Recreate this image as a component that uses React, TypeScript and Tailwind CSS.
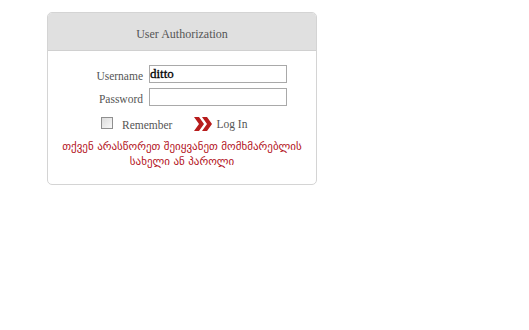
import { useState } from "react";

const serif = { fontFamily: '"Liberation Serif", "DejaVu Serif", serif' };

function Chevrons() {
  return (
    <svg width="20" height="16" viewBox="0 0 20 16">
      <path d="M1 1 L6 1 L11 8 L6 15 L1 15 L6 8 Z" fill="#b71c1c" />
      <path d="M9 1 L14 1 L19 8 L14 15 L9 15 L14 8 Z" fill="#b71c1c" />
    </svg>
  );
}

export default function App() {
  const [username, setUsername] = useState("ditto");
  const [password, setPassword] = useState("");
  const [remember, setRemember] = useState(false);

  return (
    <div className="w-[529px] h-[330px] bg-white pt-[12px] pl-[47px]" style={serif}>
      <div className="w-[270px] h-[173px] rounded-[5px] border border-[#d4d4d4] overflow-hidden">
        {/* header */}
        <div className="h-[38px] bg-[#e0e0e0] border-b border-[#d0d0d0] flex items-center justify-center text-[12px] text-[#555] pt-[4px]">
          User Authorization
        </div>

        {/* form */}
        <div className="pt-[14px] flex flex-col">
          <div className="flex items-center h-[18px]">
            <label className="w-[101px] text-right text-[11.5px] text-[#555] pr-[6px] pt-[6px]">Username</label>
            <input
              value={username}
              onChange={(e) => setUsername(e.target.value)}
              className="w-[138px] h-[18px] border border-[#a9a9a9] text-[13px] text-black px-0 leading-none outline-none [-webkit-text-stroke:0.3px_black]"
              style={serif}
            />
          </div>
          <div className="flex items-center h-[18px] mt-[5px]">
            <label className="w-[101px] text-right text-[11.5px] text-[#555] pr-[6px] pt-[6px]">Password</label>
            <input
              type="password"
              value={password}
              onChange={(e) => setPassword(e.target.value)}
              className="w-[138px] h-[18px] border border-[#a9a9a9] outline-none"
            />
          </div>

          <div className="flex items-center h-[16px] mt-[10px]">
            <span
              onClick={() => setRemember(!remember)}
              className="ml-[53px] w-[12px] h-[12px] border border-[#8f8f8f] bg-gradient-to-br from-[#dcdcdc] to-[#f8f8f8] mb-[2px]"
            />
            <span className="ml-[9px] text-[11.5px] text-[#555] pt-[4px]">Remember</span>
            <button className="ml-[21px] flex items-center gap-[3px] text-[11.5px] text-[#555]" style={serif}>
              <Chevrons />
              <span className="pt-[1px]">Log In</span>
            </button>
          </div>

          <div
            className="mt-[7px] px-[4px] text-center text-[11px] leading-[15px] text-[#b3121b]"
            style={{ fontFamily: '"DejaVu Sans", "Noto Sans", sans-serif' }}
          >
            თქვენ არასწორეთ შეიყვანეთ მომხმარებლის
            <br />
            სახელი ან პაროლი
          </div>
        </div>
      </div>
    </div>
  );
}
